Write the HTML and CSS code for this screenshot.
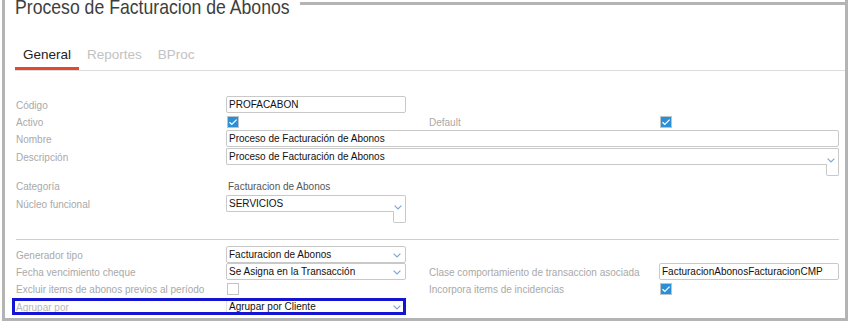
FILE: index.html
```html
<!DOCTYPE html>
<html lang="es">
<head>
<meta charset="utf-8">
<title>Proceso de Facturacion de Abonos</title>
<link rel="stylesheet" href="styles.css">
</head>
<body>
<div class="frame">
  <div class="head">
    <h1 class="title"><span class="title-text">Proceso de Facturacion de Abonos</span></h1>
    <div class="topline"></div>
  </div>
  <div class="tabs">
    <div class="tab active">General</div>
    <div class="tab">Reportes</div>
    <div class="tab">BProc</div>
  </div>

  <div class="form">
    <div class="row r-codigo">
      <div class="lbl">Código</div>
      <div class="box short">PROFACABON</div>
    </div>
    <div class="row r-activo">
      <div class="lbl">Activo</div>
      <div class="cell"><span class="chk on"><svg viewBox="0 0 12 12" width="12" height="12"><polyline points="2.5,6.2 4.8,8.4 9.6,3.6" fill="none" stroke="#fff" stroke-width="1.3"/></svg></span></div>
      <div class="lbl2">Default</div>
      <div class="cell"><span class="chk on"><svg viewBox="0 0 12 12" width="12" height="12"><polyline points="2.5,6.2 4.8,8.4 9.6,3.6" fill="none" stroke="#fff" stroke-width="1.3"/></svg></span></div>
    </div>
    <div class="row r-nombre">
      <div class="lbl">Nombre</div>
      <div class="box long">Proceso de Facturación de Abonos</div>
    </div>
    <div class="row r-desc">
      <div class="lbl">Descripción</div>
      <div class="combo long">
        <div class="combo-main">Proceso de Facturación de Abonos</div>
        <div class="combo-side">
          <div class="side-top"><svg class="chev" viewBox="0 0 8 5" width="8" height="5"><polyline points="0.6,0.6 4,4 7.4,0.6" fill="none" stroke="#7ea6da" stroke-width="1.2"/></svg></div>
          <div class="side-bot"></div>
        </div>
      </div>
    </div>
    <div class="row r-cat">
      <div class="lbl">Categoría</div>
      <div class="value">Facturacion de Abonos</div>
    </div>
    <div class="row r-nucleo">
      <div class="lbl">Núcleo funcional</div>
      <div class="combo short">
        <div class="combo-main">SERVICIOS</div>
        <div class="combo-side">
          <div class="side-top"><svg class="chev" viewBox="0 0 8 5" width="8" height="5"><polyline points="0.6,0.6 4,4 7.4,0.6" fill="none" stroke="#7ea6da" stroke-width="1.2"/></svg></div>
          <div class="side-bot"></div>
        </div>
      </div>
    </div>

    <div class="sep"></div>

    <div class="row r-gen">
      <div class="lbl">Generador tipo</div>
      <div class="box short select"><span class="txt">Facturacion de Abonos</span><svg class="chev" viewBox="0 0 8 5" width="8" height="5"><polyline points="0.6,0.6 4,4 7.4,0.6" fill="none" stroke="#7ea6da" stroke-width="1.2"/></svg></div>
    </div>
    <div class="row r-fecha">
      <div class="lbl">Fecha vencimiento cheque</div>
      <div class="box short select"><span class="txt">Se Asigna en la Transacción</span><svg class="chev" viewBox="0 0 8 5" width="8" height="5"><polyline points="0.6,0.6 4,4 7.4,0.6" fill="none" stroke="#7ea6da" stroke-width="1.2"/></svg></div>
      <div class="lbl2">Clase comportamiento de transaccion asociada</div>
      <div class="box short">FacturacionAbonosFacturacionCMP</div>
    </div>
    <div class="row r-excl">
      <div class="lbl">Excluir items de abonos previos al período</div>
      <div class="cell"><span class="chk"></span></div>
      <div class="lbl2">Incorpora items de incidencias</div>
      <div class="cell"><span class="chk on"><svg viewBox="0 0 12 12" width="12" height="12"><polyline points="2.5,6.2 4.8,8.4 9.6,3.6" fill="none" stroke="#fff" stroke-width="1.3"/></svg></span></div>
    </div>
    <div class="row r-agr focus">
      <div class="lbl">Agrupar por</div>
      <div class="box short select flat"><span class="txt">Agrupar por Cliente</span><svg class="chev" viewBox="0 0 8 5" width="8" height="5"><polyline points="0.6,0.6 4,4 7.4,0.6" fill="none" stroke="#7ea6da" stroke-width="1.2"/></svg></div>
    </div>
  </div>
</div>
</body>
</html>
```

FILE: styles.css
```css
* { box-sizing: border-box; }
html, body { margin: 0; padding: 0; background: #fff; }
body {
  font-family: "Liberation Sans", Arial, sans-serif;
  width: 850px;
  height: 324px;
  overflow: hidden;
}
.frame {
  margin-left: 2px;
  width: 846px;
  height: 321px;
  border-left: 3px solid #b4b4b4;
  border-right: 3px solid #b4b4b4;
  border-bottom: 3px solid #b4b4b4;
  overflow: hidden;
}
.head {
  display: flex;
  align-items: flex-start;
  height: 18px;
}
.title {
  flex: none;
  width: 285px;
  margin: -2px 0 0 0;
  padding-left: 10px;
  font-family: "Liberation Sans", Arial, sans-serif;
  font-weight: normal;
  font-size: 21px;
  line-height: 17px;
  color: #3e3e3e;
  white-space: nowrap;
}
.title-text {
  display: inline-block;
  transform: scaleX(0.84);
  transform-origin: left center;
}
.topline {
  flex: 1;
  margin-left: 10px;
  margin-top: 2px;
  border-top: 3px solid #b4b4b4;
}
.tabs {
  display: flex;
  margin-top: 29px;
  margin-left: 10px;
  border-bottom: 1px solid #dcdcdc;
}
.tab {
  font-size: 13.5px;
  line-height: 16px;
  padding: 0 8px 4px;
  color: #c2c2c2;
  border-bottom: 3px solid transparent;
}
.tab.active {
  color: #222;
  border-bottom-color: #e3492f;
}
.form {
  margin-top: 25px;
  padding-left: 11px;
}
.row {
  display: flex;
  align-items: flex-start;
  height: 17px;
}
.lbl {
  width: 210px;
  font-size: 10px;
  line-height: 17px;
  padding-top: 1px;
  color: #a9a9a9;
  white-space: nowrap;
}
.lbl2 {
  width: 230px;
  margin-left: 23px;
  font-size: 10px;
  line-height: 17px;
  padding-top: 1px;
  color: #a9a9a9;
  white-space: nowrap;
}
.box {
  height: 17px;
  border: 1px solid #c9c9c9;
  border-radius: 2px;
  padding-left: 2px;
  font-size: 10px;
  line-height: 15px;
  color: #111;
  white-space: nowrap;
  overflow: hidden;
}
.short { width: 180px; }
.long { width: 613px; }
.select {
  display: flex;
  align-items: center;
}
.select .txt { flex: 1; }
.select .chev { margin-right: 4px; margin-top: 2px; flex: none; }
.flat { border-color: #e2e2e2; }
.cell {
  width: 180px;
  height: 17px;
  padding-top: 3px;
  padding-left: 1px;
}
.chk {
  display: block;
  width: 12px;
  height: 12px;
  border: 1px solid #c4c4c4;
  background: #fff;
}
.chk.on { background: #2b8fd8; border-color: #b9c4cc; }
.chk svg { display: block; margin: -1px 0 0 -1px; }
.value {
  font-size: 10px;
  line-height: 17px;
  padding-top: 1px;
  color: #555;
  padding-left: 2px;
}
.combo {
  display: flex;
  align-items: flex-start;
}
.combo-main {
  flex: 1;
  height: 17px;
  border: 1px solid #c9c9c9;
  border-right: none;
  border-radius: 2px 0 0 2px;
  padding-left: 2px;
  font-size: 10px;
  line-height: 15px;
  color: #111;
  white-space: nowrap;
}
.combo-side {
  width: 13px;
  display: flex;
  flex-direction: column;
}
.side-top {
  height: 16px;
  border-top: 1px solid #c9c9c9;
  border-right: 1px solid #c9c9c9;
  border-top-right-radius: 2px;
  display: flex;
  align-items: flex-end;
  padding-left: 1px;
  padding-bottom: 1px;
}
.side-bot {
  height: 12px;
  border: 1px solid #c9c9c9;
  border-top: none;
  border-radius: 0 0 2px 2px;
}
.chev { display: block; }
.r-codigo { height: 17px; }
.r-activo { height: 17px; }
.r-nombre { height: 18px; }
.r-desc { height: 29px; }
.r-cat { height: 18px; }
.r-nucleo { height: 27px; }
.sep {
  margin-top: 17px;
  margin-bottom: 6px;
  width: 823px;
  border-top: 1px solid #cfcfcf;
}
.r-gen { height: 17px; }
.r-fecha { height: 17px; }
.r-excl { height: 18px; }
.r-agr { height: 17px; }
.r-agr .lbl { color: #b8b8b8; }
.focus {
  position: relative;
  width: 390px;
}
.focus::after {
  content: "";
  position: absolute;
  left: -4px;
  top: 0;
  right: 0;
  bottom: 0;
  border: 3px solid #1414d2;
  pointer-events: none;
}
```
